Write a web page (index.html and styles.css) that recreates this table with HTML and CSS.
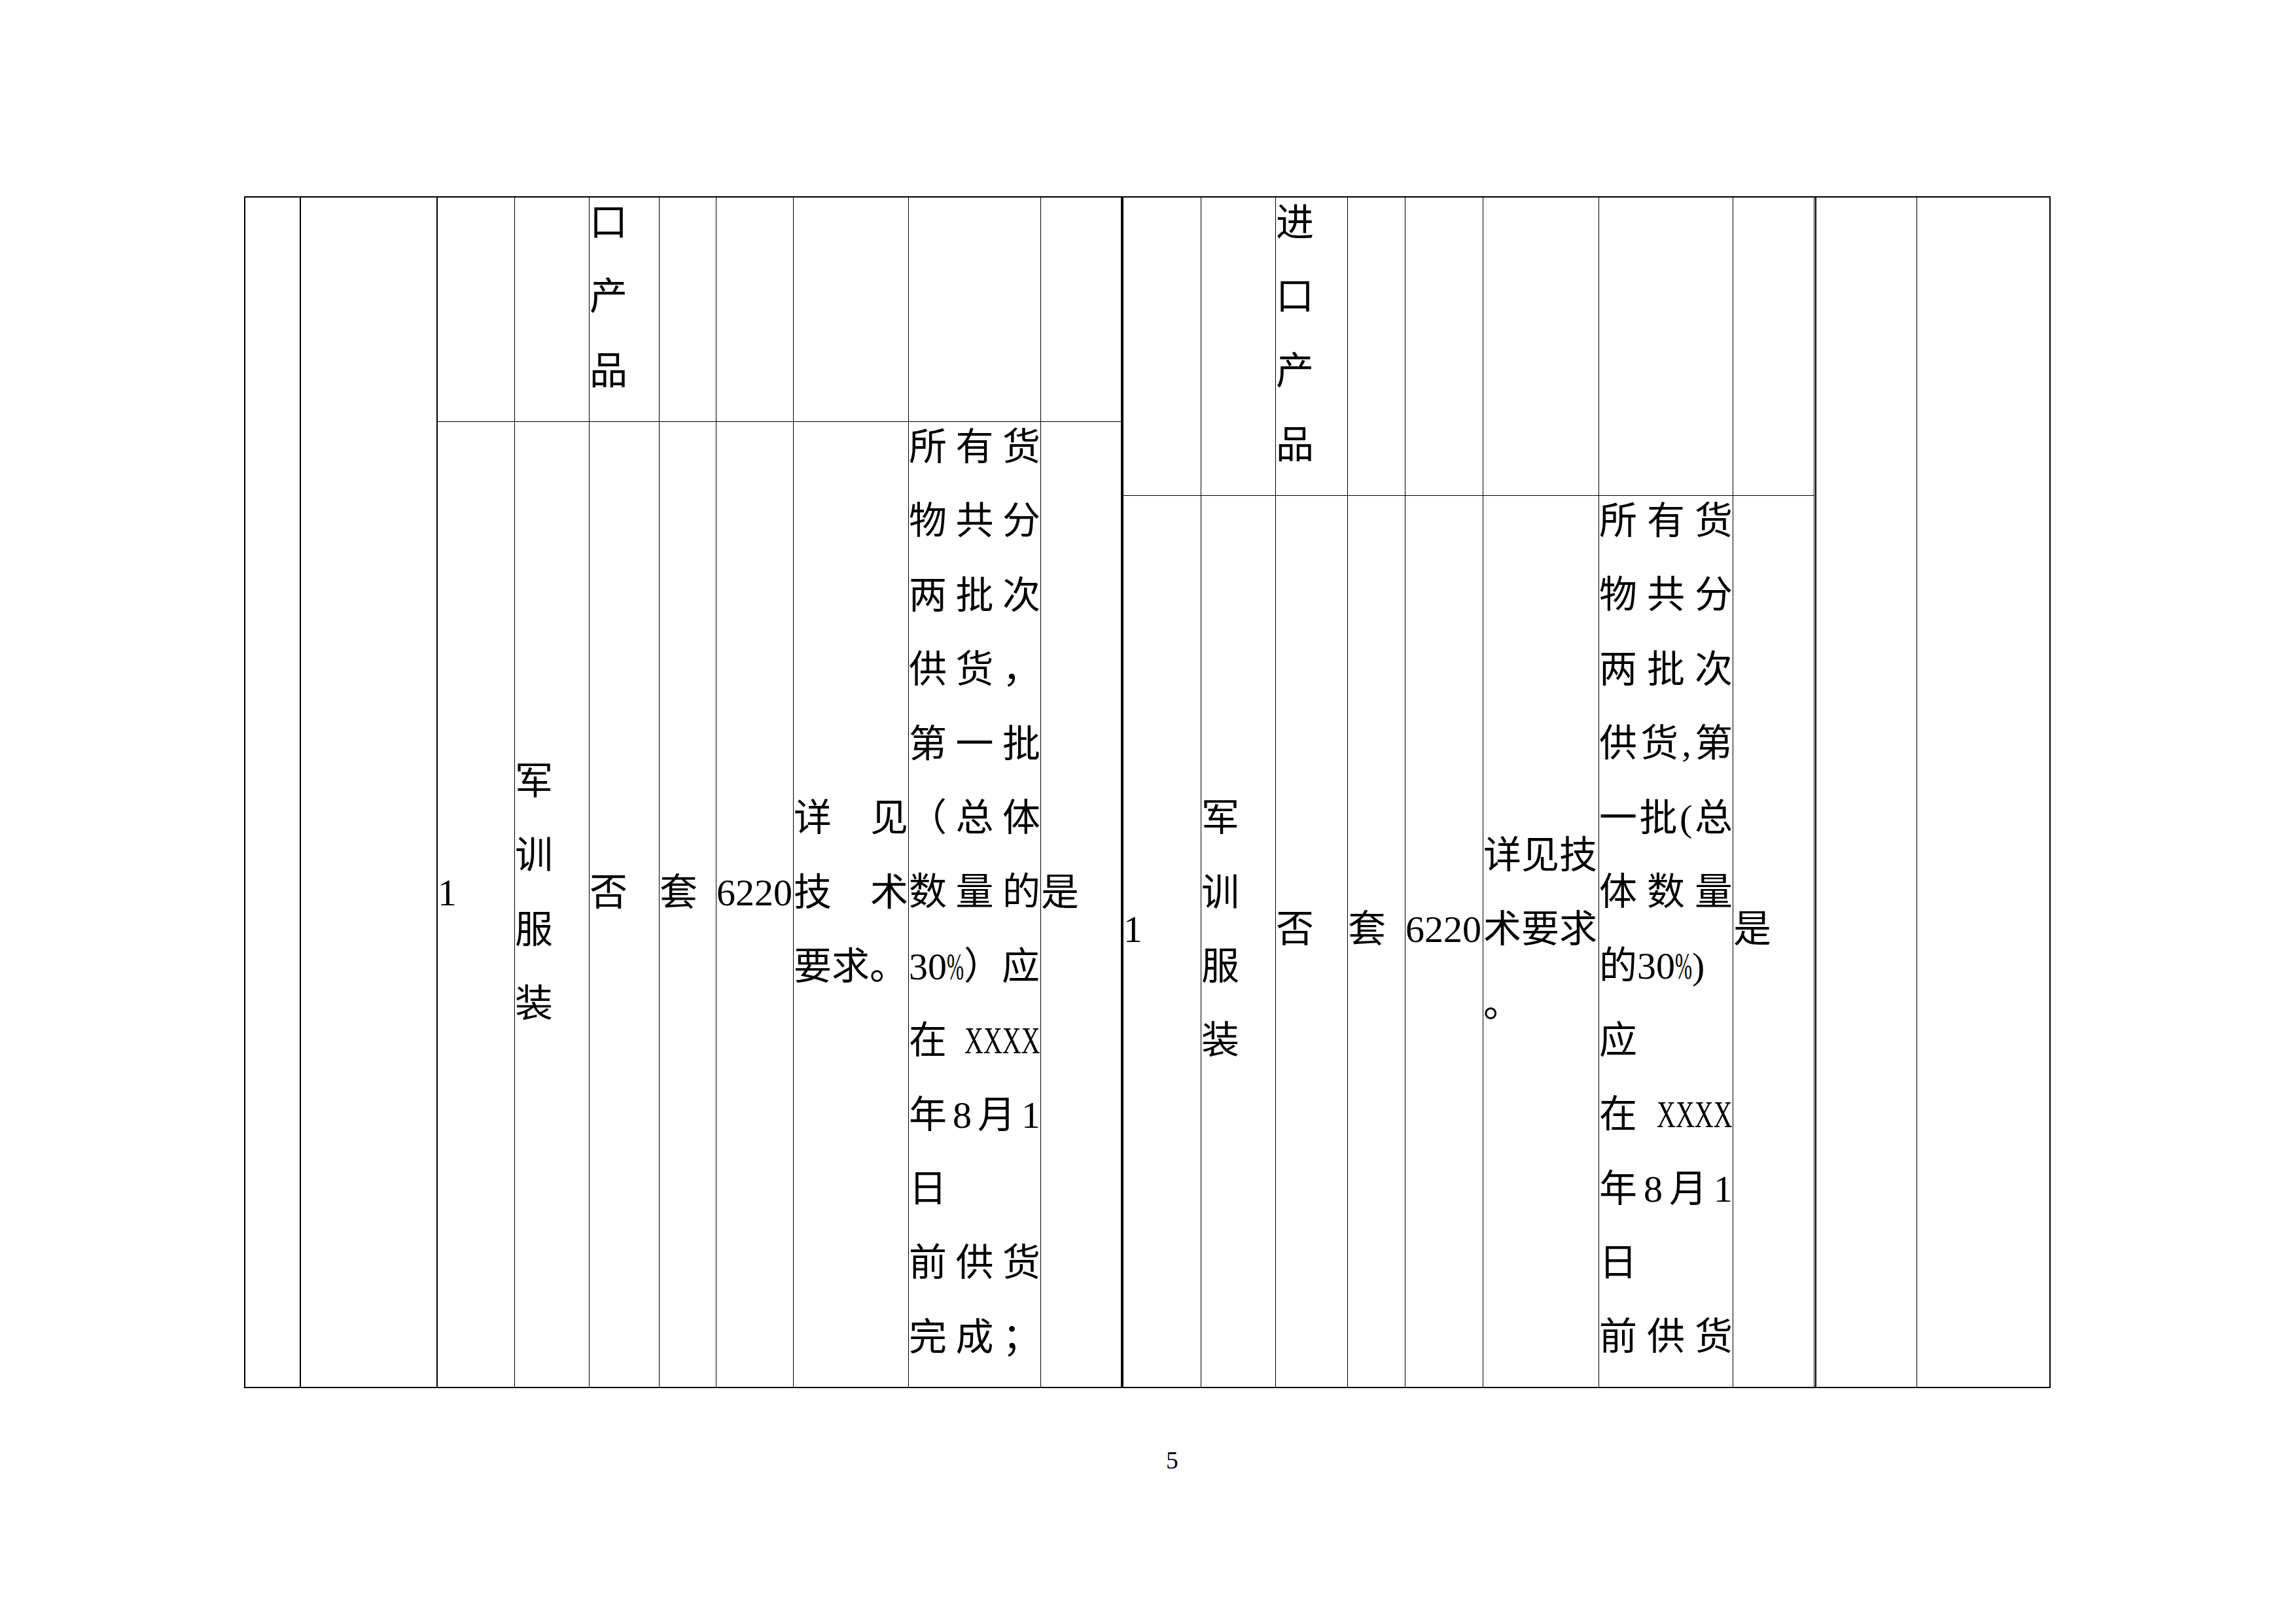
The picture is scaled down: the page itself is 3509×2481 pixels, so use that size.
FILE: index.html
```html
<!DOCTYPE html>
<html lang="zh-CN">
<head>
<meta charset="utf-8">
<title>5</title>
<link rel="stylesheet" href="styles.css">
</head>
<body>
<div class="page">
  <div class="sheet">
    <div class="col-a"></div>
    <div class="col-b"></div>

    <div class="nest nest-l">
      <div class="c"></div>
      <div class="c"></div>
      <div class="c"><div class="t">口<br>产<br>品</div></div>
      <div class="c"></div>
      <div class="c"></div>
      <div class="c"></div>
      <div class="c"></div>
      <div class="c"></div>

      <div class="c mid"><div class="t">1</div></div>
      <div class="c mid"><div class="t">军<br>训<br>服<br>装</div></div>
      <div class="c mid"><div class="t">否</div></div>
      <div class="c mid"><div class="t">套</div></div>
      <div class="c mid"><div class="t">6220</div></div>
      <div class="c mid"><div class="t">
        <div class="j">详见</div>
        <div class="j">技术</div>
        <div>要求。</div>
      </div></div>
      <div class="c"><div class="t">
        <div class="j">所有货</div>
        <div class="j">物共分</div>
        <div class="j">两批次</div>
        <div class="j">供货，</div>
        <div class="j">第一批</div>
        <div class="j">（总体</div>
        <div class="j">数量的</div>
        <div class="n">30<span class="hw"><span>%</span></span>）应</div>
        <div class="j">在 <span class="x4"><span>XXXX</span></span></div>
        <div class="j">年8月1</div>
        <div>日</div>
        <div class="j">前供货</div>
        <div class="j">完成；</div>
      </div></div>
      <div class="c mid"><div class="t">是</div></div>
    </div>

    <div class="nest nest-r">
      <div class="c"></div>
      <div class="c"></div>
      <div class="c"><div class="t">进<br>口<br>产<br>品</div></div>
      <div class="c"></div>
      <div class="c"></div>
      <div class="c"></div>
      <div class="c"></div>
      <div class="c"></div>

      <div class="c mid"><div class="t">1</div></div>
      <div class="c mid"><div class="t">军<br>训<br>服<br>装</div></div>
      <div class="c mid"><div class="t">否</div></div>
      <div class="c mid"><div class="t">套</div></div>
      <div class="c mid"><div class="t">6220</div></div>
      <div class="c mid"><div class="t">
        <div>详见技</div>
        <div>术要求</div>
        <div>。</div>
      </div></div>
      <div class="c"><div class="t">
        <div class="j">所有货</div>
        <div class="j">物共分</div>
        <div class="j">两批次</div>
        <div class="j">供货,第</div>
        <div class="j">一批(总</div>
        <div class="j">体数量</div>
        <div class="n">的30<span class="hw"><span>%</span></span>)</div>
        <div>应</div>
        <div class="j">在 <span class="x4"><span>XXXX</span></span></div>
        <div class="j">年8月1</div>
        <div>日</div>
        <div class="j">前供货</div>
      </div></div>
      <div class="c mid"><div class="t">是</div></div>
    </div>

    <div class="col-e"></div>
    <div class="col-f"></div>
  </div>
  <div class="pageno">5</div>
</div>
</body>
</html>
```

FILE: styles.css
```css
html, body {
  margin: 0;
  padding: 0;
  background: #fff;
}

body {
  font-family: "Liberation Serif", "Noto Sans CJK SC", serif;
  color: #000;
}

.page {
  width: 3509px;
  height: 2481px;
  box-sizing: border-box;
  padding: 300px 0 0 373px;
  overflow: hidden;
}

.sheet {
  display: grid;
  grid-template-columns: 83px 209px 1046px 1060px 156px 203px;
  width: 2761px;
  height: 1822px;
  box-sizing: border-box;
  border: 2px solid #000;
}

.col-b {
  border-left: 2px solid #000;
}

.col-e {
  margin-left: 1px;
  border-left: 2px solid #000;
}

.col-f {
  border-left: 1px solid #000;
}

.nest {
  display: grid;
  box-sizing: border-box;
  min-height: 0;
}

.nest-l {
  border-left: 2px solid #000;
  grid-template-columns: 117px 114px 107px 87px 118px 176px 202px 123px;
  grid-template-rows: 342px 1476px;
}

.nest-r {
  border-left: 4px solid #000;
  border-right: 1px solid #000;
  grid-template-columns: 118px 114px 110px 88px 119px 177px 205px 124px;
  grid-template-rows: 455px 1363px;
}

.c {
  box-sizing: border-box;
  min-width: 0;
  min-height: 0;
  overflow: hidden;
  font-size: 58px;
  line-height: 113.4px;
}

.nest > .c:not(:nth-child(8n+1)) {
  border-left: 1px solid #000;
}

.nest > .c:nth-child(n+9) {
  border-top: 1px solid #000;
}

.c.mid {
  display: flex;
  flex-direction: column;
  justify-content: center;
}

.t {
  margin: -18px 0 18px;
}

.j {
  text-align: justify;
  text-align-last: justify;
}

.n {
  white-space: nowrap;
}

.hw {
  display: inline-block;
  width: 26px;
}

.hw > span {
  display: inline-block;
  transform: scaleX(0.54);
  transform-origin: 0 50%;
}

.x4 {
  display: inline-block;
  width: 116px;
  white-space: nowrap;
}

.x4 > span {
  display: inline-block;
  transform: scaleX(0.69);
  transform-origin: 0 50%;
}

.pageno {
  margin: 92px 0 0 1409px;
  width: 19px;
  font-size: 37.5px;
  line-height: 1;
}
```
